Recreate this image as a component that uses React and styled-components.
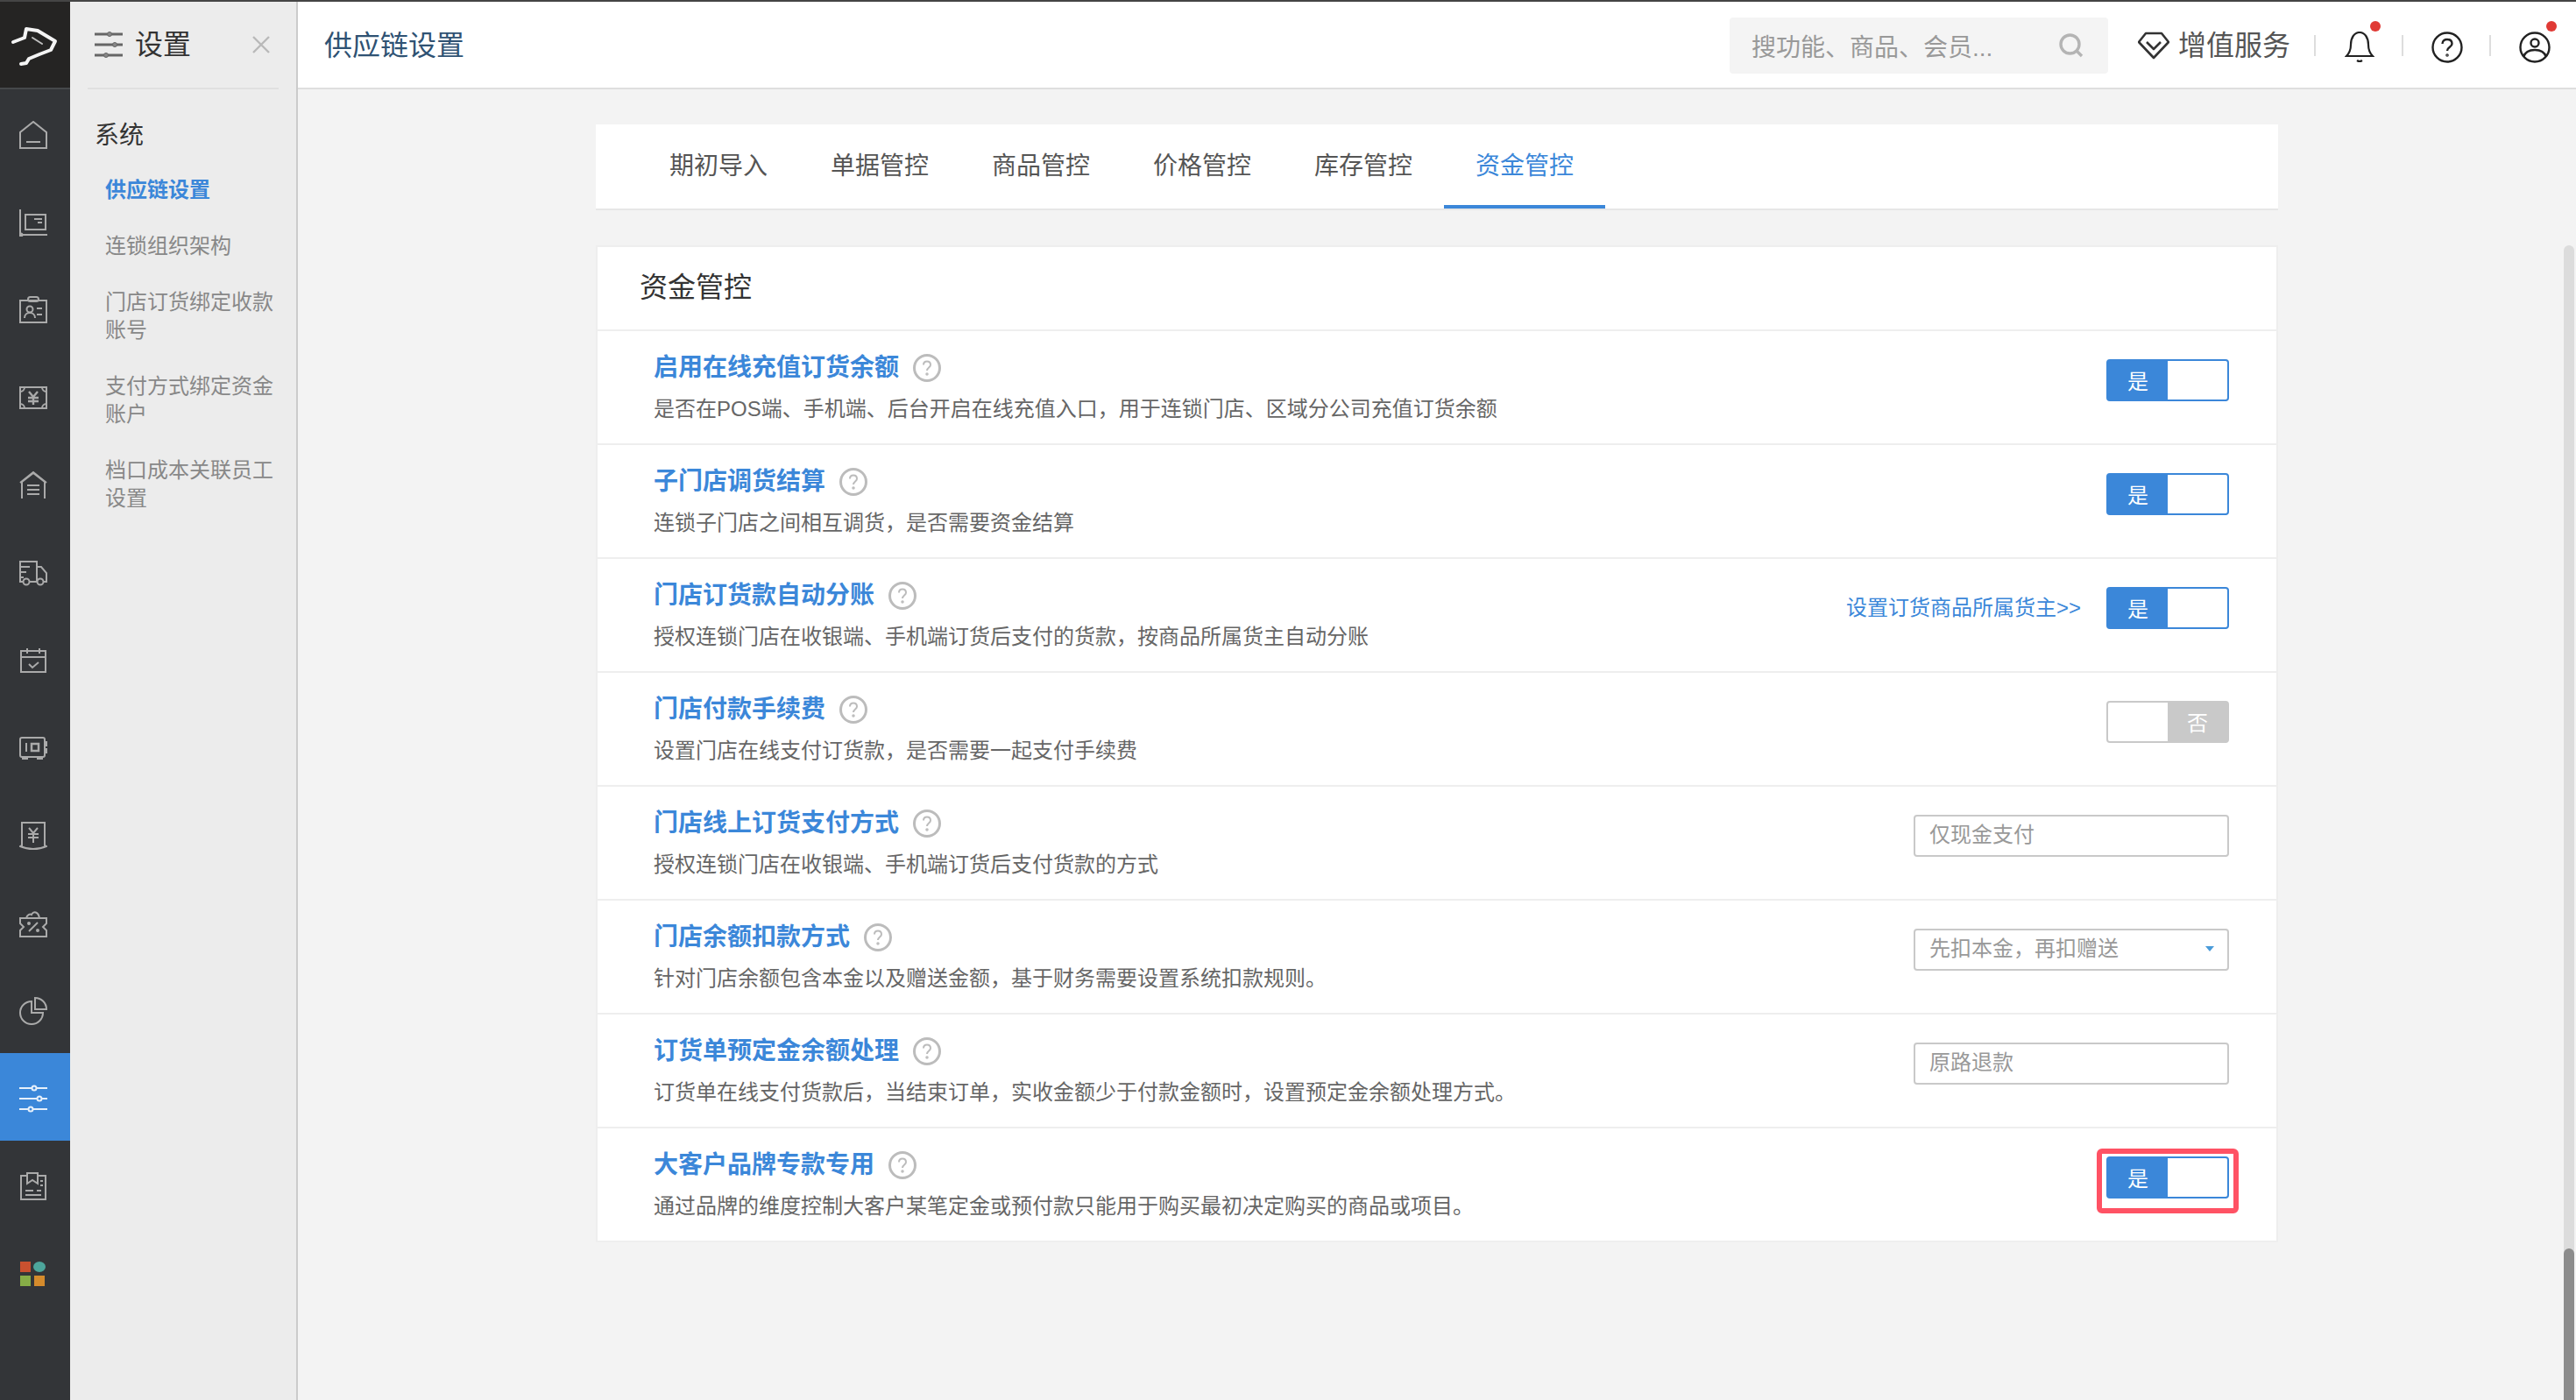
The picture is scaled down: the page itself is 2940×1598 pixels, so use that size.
import React from 'react';
import styled, { createGlobalStyle } from 'styled-components';

const GlobalStyle = createGlobalStyle`
  * {
    box-sizing: border-box;
  }

  html, body {
    margin: 0;
    padding: 0;
    height: 100%;
    font-family: "Liberation Sans", "Noto Sans CJK SC", sans-serif;
    background-color: #f3f3f3;
    overflow: hidden;
  }
`;

const Page = styled.div`
  display: flex;
  height: 100vh;
  border-top: 2px solid #454545;
  overflow: hidden;
`;

const Rail = styled.nav`
  display: flex;
  flex-direction: column;
  flex-shrink: 0;
  width: 80px;
  background-color: #333538;
`;

const LogoBox = styled.div`
  display: flex;
  align-items: center;
  justify-content: center;
  height: 100px;
  background-color: #252423;
  border-bottom: 2px solid #46484a;
`;

const RailItem = styled.div`
  display: flex;
  align-items: center;
  justify-content: center;
  flex-shrink: 0;
  height: 100px;
  padding: 3px 4px 0 0;
  color: ${({ $active }) => ($active ? '#e6f0fb' : '#aaaaaa')};
  background-color: ${({ $active }) => ($active ? '#3b87d9' : 'transparent')};
`;

const Sidebar = styled.aside`
  flex-shrink: 0;
  width: 260px;
  background-color: #ececec;
  border-right: 2px solid #cbcbcb;
`;

const SideHead = styled.div`
  display: flex;
  align-items: center;
  height: 100px;
  margin: 0 20px;
  padding: 0 10px 0 8px;
  border-bottom: 2px solid #e0e0e0;
`;

const SideTitle = styled.span`
  flex: 1;
  margin-left: 14px;
  font-size: 32px;
  line-height: 44px;
  color: #333;
`;

const GroupTitle = styled.div`
  margin: 33px 0 10px 28px;
  font-size: 28px;
  line-height: 40px;
  color: #333;
`;

const SideItem = styled.div`
  padding: 16px 24px 16px 40px;
  font-size: 24px;
  line-height: 32px;
  font-weight: ${({ $active }) => ($active ? 700 : 400)};
  color: ${({ $active }) => ($active ? '#3b87d9' : '#888')};
`;

const Main = styled.main`
  position: relative;
  display: flex;
  flex-direction: column;
  flex: 1;
  min-width: 0;
`;

const Header = styled.header`
  display: flex;
  align-items: center;
  flex-shrink: 0;
  height: 100px;
  padding: 2px 0 0 30px;
  background-color: #fff;
  border-bottom: 2px solid #dedede;
`;

const PageTitle = styled.h1`
  flex: 1;
  margin: 0;
  font-size: 32px;
  font-weight: 400;
  line-height: 44px;
  color: #2f5273;
`;

const SearchBox = styled.div`
  display: flex;
  align-items: center;
  justify-content: space-between;
  width: 432px;
  height: 64px;
  padding: 0 28px 0 25px;
  border-radius: 4px;
  background-color: #f4f4f4;
  font-size: 28px;
  color: #999;
`;

const ServiceLink = styled.div`
  display: flex;
  align-items: center;
  gap: 10px;
  margin: 0 27px 0 34px;
  font-size: 32px;
  line-height: 44px;
  color: #555;
`;

const Divider = styled.span`
  flex-shrink: 0;
  width: 2px;
  height: 24px;
  background-color: #dddddd;
`;

const IconCell = styled.div`
  display: flex;
  padding: 4px 30px 0 32px;

  &:last-child {
    padding-right: 29px;
  }
`;

const IconWrap = styled.div`
  position: relative;
  display: flex;
  align-items: center;
  justify-content: center;
  width: 36px;
  height: 36px;
`;

const Dot = styled.span`
  position: absolute;
  top: -12px;
  right: ${({ $right }) => $right}px;
  width: 12px;
  height: 12px;
  border-radius: 50%;
  background-color: #e03a35;
`;

const Content = styled.div`
  flex: 1;
  padding-top: 40px;
  background-color: #f3f3f3;
`;

const Column = styled.div`
  width: 1920px;
  margin: 0 auto;
`;

const Tabs = styled.div`
  display: flex;
  height: 98px;
  padding-left: 48px;
  background-color: #fff;
  border-bottom: 2px solid #e6e6e6;
`;

const Tab = styled.div`
  width: 184px;
  height: 96px;
  border-bottom: 4px solid ${({ $active }) => ($active ? '#3b87d9' : 'transparent')};
  font-size: 28px;
  line-height: 96px;
  text-align: center;
  color: ${({ $active }) => ($active ? '#3b87d9' : '#555')};
`;

const Card = styled.section`
  margin-top: 40px;
  background-color: #fff;
  border: 2px solid #eeeeee;
  border-bottom: 0;
`;

const CardTitle = styled.h2`
  margin: 0;
  height: 96px;
  padding: 24px 0 0 48px;
  font-size: 32px;
  font-weight: 400;
  line-height: 44px;
  color: #333;
  border-bottom: 2px solid #eeeeee;
`;

const Row = styled.div`
  display: flex;
  justify-content: space-between;
  height: 130px;
  padding: 22px 54px 0 64px;
  border-bottom: 2px solid #eeeeee;
`;

const TitleLine = styled.div`
  display: flex;
  align-items: center;
  gap: 16px;
  height: 40px;
`;

const RowTitle = styled.span`
  font-size: 28px;
  font-weight: 700;
  line-height: 40px;
  color: #3b87d9;
`;

const RowDesc = styled.p`
  margin: 11px 0 0;
  font-size: 24px;
  line-height: 32px;
  color: #666;
`;

const Controls = styled.div`
  display: flex;
  align-items: center;
  gap: 29px;
  height: 48px;
  margin-top: 10px;
`;

const SideLink = styled.a`
  font-size: 24px;
  line-height: 32px;
  color: #3b87d9;
`;

const SwitchBox = styled.div`
  position: relative;
  display: flex;
  width: 140px;
  height: 48px;
  border: 2px solid ${({ $on }) => ($on ? '#3b87d9' : '#c9c9c9')};
  border-radius: 4px;
  background-color: #fff;
`;

const SwitchLabel = styled.span`
  display: flex;
  align-items: center;
  justify-content: center;
  width: 68px;
  padding-bottom: 2px;
  background-color: ${({ $on }) => ($on ? '#3b87d9' : '#c9c9c9')};
  margin-left: ${({ $on }) => ($on ? 0 : 'auto')};
  font-size: 24px;
  color: #fff;
`;

const Highlight = styled.span`
  position: absolute;
  top: -11px;
  left: -13px;
  right: -13px;
  bottom: -19px;
  border: 6px solid #ff5264;
  border-radius: 6px;
`;

const ValueBox = styled.div`
  position: relative;
  width: 360px;
  height: 48px;
  padding-left: 16px;
  border: 2px solid #c9c9c9;
  border-radius: 4px;
  font-size: 24px;
  line-height: 42px;
  color: #999;
`;

const Caret = styled.span`
  position: absolute;
  top: 18px;
  right: 15px;
  border-top: 6px solid #4a9bd9;
  border-left: 5px solid transparent;
  border-right: 5px solid transparent;
`;

const ScrollTrack = styled.div`
  position: absolute;
  top: 278px;
  right: 2px;
  bottom: 0;
  width: 12px;
  border-radius: 6px 6px 0 0;
  background-color: #dcdcdc;
`;

const ScrollThumb = styled.div`
  position: absolute;
  left: 0;
  right: 0;
  bottom: 0;
  height: 173px;
  border-radius: 6px 6px 0 0;
  background-color: #8c8c8c;
`;

const Glyph = ({ w = 32, h = 32, sw = 2, children }) => (
  <svg
    width={w}
    height={h}
    viewBox={`0 0 ${w} ${h}`}
    fill="none"
    stroke="currentColor"
    strokeWidth={sw}
    style={{ display: 'block' }}
  >
    {children}
  </svg>
);

const railIcons = [
  <Glyph key="home"><path d="M1 31V13L16 1l15 12v18z" /><path d="M8 24h16" /></Glyph>,
  <Glyph key="board">
    <path d="M1 1v29h31" /><rect x="7" y="7" width="23" height="17" />
    <path d="M17 12h9M21 16h5" /><circle cx="2" cy="30" r="1.5" />
  </Glyph>,
  <Glyph key="card">
    <rect x="1" y="5" width="30" height="25" /><rect x="10" y="1" width="12" height="5" rx="2.5" />
    <circle cx="12" cy="15" r="3.5" /><path d="M6 25c0-4 3-6 6-6s6 2 6 6M20 14h6M20 21h6" />
  </Glyph>,
  <Glyph key="money">
    <path d="M1 4h30v24H1z" /><path d="M6 4a5 5 0 0 1-5 5M26 4a5 5 0 0 0 5 5M6 28a5 5 0 0 0-5-5M26 28a5 5 0 0 1 5-5" />
    <path d="M11 9l5 6 5-6M10 16h12M10 20h12M16 15v9" strokeWidth="2.4" />
  </Glyph>,
  <Glyph key="store">
    <path d="M3 31V12L16 2l13 10v19" /><path d="M1 13L16 1l15 12" /><path d="M9 16h14M9 21h14M9 26h14" />
  </Glyph>,
  <Glyph key="truck">
    <path d="M4 26H1V3h19v23h-8M1 9h11M1 15h7M1 21h4" /><path d="M20 9h5l6 7v10h-3" />
    <circle cx="8" cy="26" r="3.5" /><circle cx="24" cy="26" r="3.5" />
  </Glyph>,
  <Glyph key="calendar">
    <rect x="2" y="5" width="28" height="24" /><path d="M2 12h28M9 2v6M23 2v6" /><path d="M11 20l4 4 7-6" />
  </Glyph>,
  <Glyph key="safe">
    <rect x="1" y="4" width="28" height="22" rx="2" /><path d="M4 26v2h5v-2M21 26v2h5v-2M29 9h2v4h-2M29 17h2v4h-2M8 10v10" />
    <rect x="14" y="11" width="8" height="8" strokeWidth="2.5" />
  </Glyph>,
  <Glyph key="bill">
    <path d="M3 1h26v26l2 1c-9 4-21 4-30 0l2-1z" />
    <path d="M11 7l5 6 5-6M10 14h12M10 18h12M16 13v11" />
  </Glyph>,
  <Glyph key="coupon">
    <path d="M1 10h30v6l-4 4 4 4v7H1v-7l4-4-4-4z" /><path d="M8 10c1-4 4-5 6-4 2-5 8-3 9 4" />
    <path d="M11 25l10-10" /><circle cx="11" cy="16" r="1" /><circle cx="21" cy="24" r="1" />
  </Glyph>,
  <Glyph key="pie">
    <path d="M14 5a13 13 0 1 0 13 13H14z" /><path d="M18 1a13 13 0 0 1 13 13H18z" />
  </Glyph>,
  <Glyph key="sliders">
    <path d="M0 4h32M0 16h32M0 28h32" />
    <circle cx="17" cy="4" r="2.5" fill="#3b87d9" /><circle cx="23" cy="16" r="2.5" fill="#3b87d9" />
    <circle cx="13" cy="28" r="2.5" fill="#3b87d9" />
  </Glyph>,
  <Glyph key="manual">
    <path d="M8 4H2v27h28V4h-8" /><path d="M9 1h12v12l-6-4-6 4z" /><path d="M24 10h3M24 15h3M7 21h9M20 21h5M7 26h18" />
  </Glyph>,
];

const GridIcon = () => (
  <svg width="30" height="28" viewBox="0 0 30 28" style={{ display: 'block' }}>
    <rect x="0" y="0" width="12" height="12" fill="#c9512f" />
    <ellipse cx="22" cy="6" rx="7" ry="6" fill="#4da59b" />
    <rect x="0" y="16" width="12" height="12" fill="#86ad47" />
    <rect x="16" y="16" width="12" height="12" fill="#d58b2c" />
  </svg>
);

const LogoMark = () => (
  <svg width="52" height="44" viewBox="0 0 52 44" fill="none" stroke="#f4f4f4" strokeLinejoin="round" strokeLinecap="round" style={{ display: 'block', overflow: 'visible' }}>
    <path d="M1 19l13-5 2-10 13 2 20 12-5 10-13 5-12 5-3 5-6 1" strokeWidth="4" />
    <path d="M23 14l11 7" strokeWidth="2" opacity="0.75" />
  </svg>
);

const HeadSliders = () => (
  <svg width="32" height="30" viewBox="0 0 32 30" fill="none" stroke="#666" strokeWidth="3" style={{ display: 'block' }}>
    <path d="M0 3h32M0 15h32M0 27h32" />
    <circle cx="17" cy="3" r="2.5" fill="#888" strokeWidth="1" />
    <circle cx="23" cy="15" r="2.5" fill="#888" strokeWidth="1" />
    <circle cx="13" cy="27" r="2.5" fill="#888" strokeWidth="1" />
  </svg>
);

const CloseMark = () => (
  <svg width="20" height="20" viewBox="0 0 20 20" stroke="#b9b9b9" strokeWidth="2.4" style={{ display: 'block' }}>
    <path d="M1 1l18 18M19 1L1 19" />
  </svg>
);

const SearchMark = () => (
  <svg width="28" height="28" viewBox="0 0 28 28" fill="none" stroke="#b4b4b4" strokeWidth="3.4" style={{ display: 'block' }}>
    <circle cx="12.5" cy="12.5" r="10.5" /><path d="M20 20l6 6" />
  </svg>
);

const GemMark = () => (
  <svg width="36" height="32" viewBox="0 0 36 32" fill="none" stroke="#333" strokeWidth="2.6" strokeLinejoin="round" style={{ display: 'block' }}>
    <path d="M9 2h18l8 10-17 18L1 12z" /><path d="M10 12l8 8 8-8" />
  </svg>
);

const BellMark = () => (
  <svg width="34" height="36" viewBox="0 0 34 36" fill="none" stroke="#222" strokeWidth="2.2" style={{ display: 'block' }}>
    <path d="M2 28c3-3 5-7 5-13C7 7 11 1 17 1s10 6 10 14c0 6 2 10 5 13z" />
    <path d="M14 33q3 2 6 0" />
  </svg>
);

const HelpMark = () => (
  <svg width="36" height="36" viewBox="0 0 36 36" fill="none" stroke="#222" strokeWidth="2.4" style={{ display: 'block' }}>
    <circle cx="18" cy="18" r="16.5" />
    <path d="M12.5 14c0-3.5 2.5-5 5.5-5s5.5 1.500 5.500 5c0 4-5.500 3.500-5.500 8" />
    <circle cx="18" cy="27" r="0.6" />
  </svg>
);

const UserMark = () => (
  <svg width="36" height="36" viewBox="0 0 36 36" fill="none" stroke="#222" strokeWidth="2.4" style={{ display: 'block' }}>
    <circle cx="18" cy="18" r="16.5" />
    <circle cx="18" cy="13" r="4.500" />
    <path d="M5 29c2-6 8-8 13-8s11 2 13 8" />
  </svg>
);

const QuestionMark = () => (
  <svg width="32" height="32" viewBox="0 0 32 32" fill="none" stroke="#bcbcbc" strokeWidth="3" style={{ display: 'block' }}>
    <circle cx="16" cy="16" r="14.500" />
    <path d="M12 12.500c0-2.500 1.800-4 4-4s4 1.500 4 4c0 3-4 3-4 6.500" strokeWidth="2" />
    <circle cx="16" cy="23" r="1" strokeWidth="1.500" />
  </svg>
);

const sideItems = ['供应链设置', '连锁组织架构', '门店订货绑定收款账号', '支付方式绑定资金账户', '档口成本关联员工设置'];
const tabs = ['期初导入', '单据管控', '商品管控', '价格管控', '库存管控', '资金管控'];

const rows = [
  { title: '启用在线充值订货余额', desc: '是否在POS端、手机端、后台开启在线充值入口，用于连锁门店、区域分公司充值订货余额', on: true },
  { title: '子门店调货结算', desc: '连锁子门店之间相互调货，是否需要资金结算', on: true },
  { title: '门店订货款自动分账', desc: '授权连锁门店在收银端、手机端订货后支付的货款，按商品所属货主自动分账', on: true, link: '设置订货商品所属货主>>' },
  { title: '门店付款手续费', desc: '设置门店在线支付订货款，是否需要一起支付手续费', on: false },
  { title: '门店线上订货支付方式', desc: '授权连锁门店在收银端、手机端订货后支付货款的方式', value: '仅现金支付' },
  { title: '门店余额扣款方式', desc: '针对门店余额包含本金以及赠送金额，基于财务需要设置系统扣款规则。', value: '先扣本金，再扣赠送', select: true },
  { title: '订货单预定金余额处理', desc: '订货单在线支付货款后，当结束订单，实收金额少于付款金额时，设置预定金余额处理方式。', value: '原路退款' },
  { title: '大客户品牌专款专用', desc: '通过品牌的维度控制大客户某笔定金或预付款只能用于购买最初决定购买的商品或项目。', on: true, marked: true },
];

function Switch({ on, marked }) {
  return (
    <SwitchBox $on={on}>
      <SwitchLabel $on={on}>{on ? '是' : '否'}</SwitchLabel>
      {marked && <Highlight />}
    </SwitchBox>
  );
}

function SettingRow({ row }) {
  return (
    <Row>
      <div>
        <TitleLine>
          <RowTitle>{row.title}</RowTitle>
          <QuestionMark />
        </TitleLine>
        <RowDesc>{row.desc}</RowDesc>
      </div>
      <Controls>
        {row.link && <SideLink>{row.link}</SideLink>}
        {row.value ? (
          <ValueBox>
            {row.value}
            {row.select && <Caret />}
          </ValueBox>
        ) : (
          <Switch on={row.on} marked={row.marked} />
        )}
      </Controls>
    </Row>
  );
}

export default function App() {
  return (
    <Page>
      <GlobalStyle />
      <Rail>
        <LogoBox><LogoMark /></LogoBox>
        {railIcons.map((icon, i) => (
          <RailItem key={icon.key} $active={i === 11}>{icon}</RailItem>
        ))}
        <RailItem><GridIcon /></RailItem>
      </Rail>
      <Sidebar>
        <SideHead>
          <HeadSliders />
          <SideTitle>设置</SideTitle>
          <CloseMark />
        </SideHead>
        <GroupTitle>系统</GroupTitle>
        {sideItems.map((item, i) => (
          <SideItem key={item} $active={i === 0}>{item}</SideItem>
        ))}
      </Sidebar>
      <Main>
        <Header>
          <PageTitle>供应链设置</PageTitle>
          <SearchBox>
            <span>搜功能、商品、会员...</span>
            <SearchMark />
          </SearchBox>
          <ServiceLink>
            <GemMark />
            <span>增值服务</span>
          </ServiceLink>
          <Divider />
          <IconCell>
            <IconWrap>
              <BellMark />
              <Dot $right={-6} />
            </IconWrap>
          </IconCell>
          <Divider />
          <IconCell><IconWrap><HelpMark /></IconWrap></IconCell>
          <Divider />
          <IconCell>
            <IconWrap>
              <UserMark />
              <Dot $right={-7} />
            </IconWrap>
          </IconCell>
        </Header>
        <Content>
          <Column>
            <Tabs>
              {tabs.map((tab, i) => (
                <Tab key={tab} $active={i === 5}>{tab}</Tab>
              ))}
            </Tabs>
            <Card>
              <CardTitle>资金管控</CardTitle>
              {rows.map((row) => (
                <SettingRow key={row.title} row={row} />
              ))}
            </Card>
          </Column>
        </Content>
        <ScrollTrack>
          <ScrollThumb />
        </ScrollTrack>
      </Main>
    </Page>
  );
}
